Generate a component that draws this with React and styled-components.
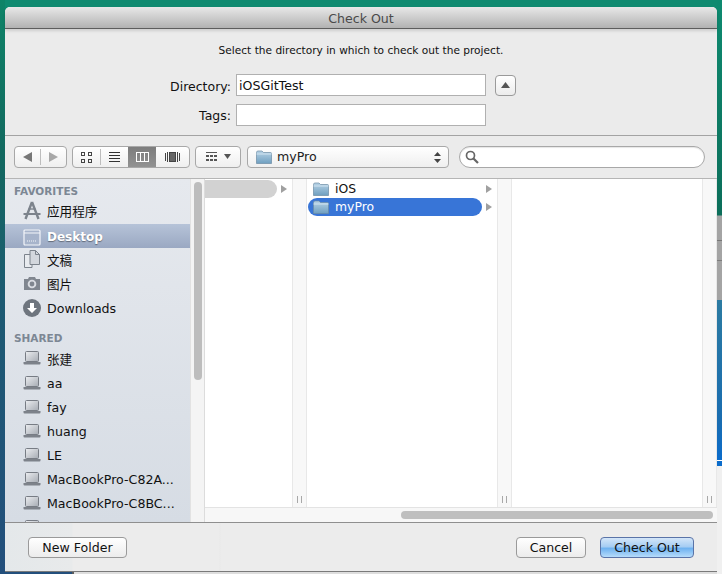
import React from 'react';
import styled, { createGlobalStyle } from 'styled-components';

const GlobalStyle = createGlobalStyle`
  html, body { margin: 0; padding: 0; }
  body {
    width: 722px;
    height: 574px;
    overflow: hidden;
    font-family: "Lucida Grande", "DejaVu Sans", "Noto Sans CJK SC", sans-serif;
  }
`;

const Desktop = styled.div`
  width: 722px;
  height: 574px;
  padding: 7px 5px 0 5px;
  box-sizing: border-box;
  overflow: hidden;
  background:
    linear-gradient(180deg, #0e8a70 0, #0c6e5a 215px, #a4a4a4 216px, #a4a4a4 240px, #777 240px, #777 241px, #a4a4a4 241px, #a4a4a4 260px, #7d7d7d 260px, #7d7d7d 261px, #a4a4a4 261px, #a4a4a4 300px, #2c7ba2 300px, #1a6db0 420px, #0b6ccb 460px, #fff 460px, #fff 461px, #0b6ccb 461px, #0b6ccb 466px, #f0f0f0 466px) right top / 5px 100% no-repeat,
    linear-gradient(180deg, #0e8468 0, #12695f 150px, #1d5a72 300px, #234f7c 574px) left top / 5px 100% no-repeat,
    linear-gradient(90deg, #234f7c 0, #234f7c 72px, #5c5c5c 72px, #5c5c5c 74px, #dedede 74px) left bottom / 100% 3px no-repeat,
    #0f8a70;
`;

const Sheet = styled.div`
  width: 712px;
  height: 564px;
  display: flex;
  flex-direction: column;
  background: #ebebeb;
  border-radius: 5px 5px 0 0;
  box-shadow: 0 1px 0 #7a7a7a;
`;

const TitleBar = styled.div`
  flex: none;
  padding-top: 1px;
  height: 20px;
  display: flex;
  align-items: center;
  justify-content: center;
  font-size: 12.6px;
  color: #4a4a4a;
  background: linear-gradient(180deg, #e8e8e8, #b2b2b2);
  border-bottom: 1px solid #5d5d5d;
  border-radius: 5px 5px 0 0;
  box-shadow: 0 2px 3px rgba(0, 0, 0, 0.12);
`;

const Accessory = styled.div`
  height: 107px;
  flex: none;
  box-sizing: border-box;
  display: flex;
  flex-direction: column;
  border-bottom: 1px solid #a3a3a3;
`;

const Prompt = styled.div`
  margin-top: 14px;
  height: 14px;
  line-height: 14px;
  text-align: center;
  font-size: 10.6px;
  color: #111;
`;

const FormRow = styled.div`
  display: flex;
  align-items: center;
  height: 22px;
  margin-top: ${(p) => p.$top}px;
`;

const FieldLabel = styled.label`
  width: 226px;
  padding-top: ${(p) => p.$drop || 0}px;
  text-align: right;
  font-size: 12.5px;
  color: #111;
  margin-right: 5px;
`;

const TextField = styled.div`
  width: 250px;
  height: 22px;
  box-sizing: border-box;
  border: 1px solid #b0b0b0;
  background: #fff;
  padding-left: 2px;
  line-height: 22px;
  font-size: 12.6px;
  color: #111;
`;

const DisclosureButton = styled.button`
  width: 21px;
  height: 21px;
  margin-left: 9px;
  padding: 0;
  display: flex;
  align-items: center;
  justify-content: center;
  border: 1px solid #9a9a9a;
  border-radius: 4px;
  background: linear-gradient(180deg, #fff, #ececec);
`;

const Toolbar = styled.div`
  height: 43px;
  flex: none;
  box-sizing: border-box;
  display: flex;
  align-items: center;
  padding: 0 12px 0 9px;
  border-bottom: 1px solid #b5b5b5;
`;

const Segmented = styled.div`
  flex: none;
  display: flex;
  align-items: center;
  height: 22px;
  box-sizing: border-box;
  margin-right: ${(p) => p.$gap}px;
  border: 1px solid #a8a8a8;
  border-radius: 4px;
  overflow: hidden;
  background: linear-gradient(180deg, #fff, #efefef);
`;

const Segment = styled.div`
  width: ${(p) => p.$w}px;
  align-self: stretch;
  display: flex;
  align-items: center;
  justify-content: center;
  background: ${(p) => (p.$active ? 'linear-gradient(180deg, #7d7d7d, #929292)' : 'transparent')};
`;

const SegmentLine = styled.span`
  width: 1px;
  height: 16px;
  background: #bdbdbd;
`;

const PathSelect = styled.div`
  flex: none;
  width: 202px;
  height: 22px;
  box-sizing: border-box;
  margin-right: 10px;
  display: flex;
  align-items: center;
  padding: 0 7px 0 8px;
  gap: 5px;
  border: 1px solid #a8a8a8;
  border-radius: 4px;
  font-size: 12.6px;
  color: #222;
  background: linear-gradient(180deg, #fff, #efefef);
`;

const PathName = styled.span`
  margin-bottom: 2px;
`;

const Grow = styled.span`
  flex: 1;
`;

const SearchField = styled.div`
  flex: none;
  width: 246px;
  height: 22px;
  box-sizing: border-box;
  display: flex;
  align-items: center;
  padding-left: 5px;
  border: 1px solid #a8a8a8;
  border-radius: 11px;
  background: #fff;
  box-shadow: inset 0 1px 1px rgba(0, 0, 0, 0.1);
`;

const Browser = styled.div`
  flex: 1;
  display: flex;
  min-height: 0;
  border-bottom: 1px solid #8f8f8f;
`;

const Sidebar = styled.div`
  width: 185px;
  flex: none;
  overflow: hidden;
  box-sizing: border-box;
  background: linear-gradient(180deg, #e6e9ee, #d6dce4);
`;

const SectionTitle = styled.div`
  height: 14px;
  line-height: 14px;
  padding-left: 9px;
  margin: ${(p) => p.$top}px 0 ${(p) => p.$bottom}px;
  font-size: 10.5px;
  font-weight: bold;
  color: #7c8794;
`;

const SideItem = styled.div`
  height: 24px;
  box-sizing: border-box;
  display: flex;
  align-items: center;
  gap: 6px;
  padding: ${(p) => p.$drop || 0}px 0 ${(p) => p.$lift || 0}px 18px;
  font-size: ${(p) => (p.$active ? 12 : 12.6)}px;
  white-space: nowrap;
  color: ${(p) => (p.$active ? '#fff' : '#111')};
  font-weight: ${(p) => (p.$active ? 'bold' : 'normal')};
  text-shadow: ${(p) => (p.$active ? '0 1px 1px rgba(0,0,0,0.4)' : 'none')};
  background: ${(p) => (p.$active ? 'linear-gradient(180deg, #b6c3d8, #9aa8c2)' : 'transparent')};
  & > svg { flex: none; }
`;

const SideScroll = styled.div`
  width: 15px;
  flex: none;
  box-sizing: border-box;
  padding: 3px 2px 0 3px;
  background: #f4f4f4;
  border-left: 1px solid #e2e2e2;
  border-right: 1px solid #dcdcdc;
`;

const SideThumb = styled.div`
  height: 198px;
  border-radius: 4px;
  background: #bdbdbd;
`;

const ColumnsPane = styled.div`
  flex: 1;
  min-width: 0;
  display: flex;
  flex-direction: column;
  background: #fff;
`;

const Columns = styled.div`
  flex: 1;
  display: flex;
  min-height: 0;
`;

const Column = styled.div`
  width: ${(p) => p.$w}px;
  flex: none;
  box-sizing: border-box;
  padding-top: 1px;
  display: flex;
  flex-direction: column;
`;

const Divider = styled.div`
  flex: ${(p) => (p.$last ? '1' : '0 0 15px')};
  display: flex;
  align-items: flex-end;
  justify-content: center;
  padding-bottom: 4px;
  box-sizing: border-box;
  gap: 3px;
  background: #f8f8f8;
  border-left: 1px solid #e8e8e8;
  border-right: 1px solid #e8e8e8;
  & > i { width: 1px; height: 7px; background: #a8a8a8; }
`;

const Row = styled.div`
  height: 18px;
  display: flex;
  align-items: center;
  padding-left: ${(p) => (p.$flush ? 0 : 1)}px;
  font-size: 12.4px;
`;

const RowPill = styled.div`
  flex: 1;
  height: 18px;
  display: flex;
  align-items: center;
  gap: 6px;
  padding-left: 5px;
  border-radius: ${(p) => (p.$ghost ? '0 9px 9px 0' : '9px')};
  background: ${(p) => p.$bg || 'transparent'};
  color: ${(p) => (p.$selected ? '#fff' : '#111')};
`;

const RowName = styled.span`
  margin-bottom: 2px;
`;

const Arrow = styled.span`
  width: 0;
  height: 0;
  margin: 0 5px 0 4px;
  border-style: solid;
  border-width: 4px 0 4px 6px;
  border-color: transparent transparent transparent #a0a0a0;
`;

const HScroll = styled.div`
  height: 15px;
  flex: none;
  box-sizing: border-box;
  padding: 3px 4px 3px 196px;
  background: #f7f7f7;
  border-top: 1px solid #e3e3e3;
`;

const HThumb = styled.div`
  height: 8px;
  border-radius: 4px;
  background: #bfbfbf;
`;

const Footer = styled.div`
  height: 48px;
  flex: none;
  display: flex;
  align-items: center;
  padding: 0 23px;
  gap: 14px;
  background: linear-gradient(90deg, #e4e8ea 0, #e8eaeb 67px, #ececec 68px, #ececec 214px, #e9e9e9 215px, #ececec 216px);
`;

const PushButton = styled.button`
  height: 21px;
  width: ${(p) => p.$w}px;
  padding: 0;
  font: inherit;
  font-size: 12.6px;
  color: #111;
  border-radius: 4px;
  border: 1px solid ${(p) => (p.$primary ? '#5a74a8' : '#9a9a9a')};
  background: ${(p) =>
    p.$primary
      ? 'linear-gradient(180deg, #d4e6f9 0, #a6cdf3 45%, #6fb2f0 55%, #b6dcfb 100%)'
      : 'linear-gradient(180deg, #fff, #ececec)'};
`;

const Folder = ({ selected }) => (
  <svg width="16" height="14" viewBox="0 0 16 14">
    <defs>
      <linearGradient id={selected ? 'fs' : 'fn'} x1="0" y1="0" x2="0" y2="1">
        <stop offset="0" stopColor="#b7d3e6" />
        <stop offset="1" stopColor="#6f9fc0" />
      </linearGradient>
    </defs>
    <path d="M0.5 2.5 Q0.5 1 2 1 H6 L7.5 2.5 H14.5 Q15.5 2.5 15.5 3.5 V13.5 H0.5 Z" fill={`url(#${selected ? 'fs' : 'fn'})`} stroke="#6b8ba3" strokeWidth="0.7" />
    <path d="M0.5 4 H15.5" stroke="#dcebf5" strokeWidth="0.8" />
  </svg>
);

const Laptop = () => (
  <svg width="18" height="14" viewBox="0 0 18 14">
    <defs>
      <linearGradient id="lp" x1="0" y1="0" x2="1" y2="1">
        <stop offset="0" stopColor="#eceef1" />
        <stop offset="1" stopColor="#a6abb3" />
      </linearGradient>
    </defs>
    <rect x="2.5" y="0.5" width="13" height="10" rx="1" fill="url(#lp)" stroke="#777c84" />
    <path d="M0.5 11 H17.5 V12.5 Q17.5 13.5 16.5 13.5 H1.5 Q0.5 13.5 0.5 12.5 Z" fill="#7d828a" />
  </svg>
);

const AppsIcon = () => (
  <svg width="18" height="19" viewBox="0 0 18 19" fill="none" stroke="#7c838c">
    <path d="M9 1 L2.5 18 M9 1 L15.5 18" strokeWidth="2.4" />
    <path d="M0.5 13 H17.5" strokeWidth="2" />
    <path d="M5.5 8 H12.5" strokeWidth="1.4" />
  </svg>
);

const DesktopIcon = () => (
  <svg width="18" height="17" viewBox="0 0 18 17">
    <rect x="1" y="1" width="16" height="15" rx="1" fill="#a7b4cb" stroke="#f4f6fa" strokeWidth="1.2" />
    <path d="M1 4 H17" stroke="#f4f6fa" />
    <path d="M4 12 H14" stroke="#f4f6fa" strokeDasharray="1 1" />
  </svg>
);

const DocsIcon = () => (
  <svg width="18" height="18" viewBox="0 0 18 18">
    <path d="M1.5 4.5 H9 V17.5 H1.5 Z" fill="#e8ebef" stroke="#7c838c" />
    <path d="M7 0.5 H12.5 L16.5 4.5 V14.5 H7 Z" fill="#d3d7dd" stroke="#7c838c" />
    <path d="M12.5 0.5 V4.5 H16.5" fill="none" stroke="#7c838c" />
  </svg>
);

const CameraIcon = () => (
  <svg width="18" height="15" viewBox="0 0 18 15">
    <path d="M1 3 H5 L6 1 H12 L13 3 H17 V14 H1 Z" fill="#80868f" />
    <circle cx="9" cy="8" r="4.3" fill="#d9dce1" />
    <circle cx="9" cy="8" r="2.4" fill="#80868f" />
  </svg>
);

const DownloadIcon = () => (
  <svg width="18" height="18" viewBox="0 0 18 18">
    <circle cx="9" cy="9" r="9" fill="#6e757e" />
    <path d="M7 4 H11 V9 H14 L9 14 L4 9 H7 Z" fill="#fff" />
  </svg>
);

const shared = ['aa', 'fay', 'huang', 'LE', 'MacBookPro-C82A...', 'MacBookPro-C8BC...'];

const App = () => {
  return (
    <>
      <GlobalStyle />
      <Desktop>
        <Sheet>
          <TitleBar>Check Out</TitleBar>
          <Accessory>
            <Prompt>Select the directory in which to check out the project.</Prompt>
            <FormRow $top={17}>
              <FieldLabel $drop={2}>Directory:</FieldLabel>
              <TextField>iOSGitTest</TextField>
              <DisclosureButton>
                <svg width="9" height="6" viewBox="0 0 9 6"><path d="M4.5 0 L9 6 H0 Z" fill="#555" /></svg>
              </DisclosureButton>
            </FormRow>
            <FormRow $top={8}>
              <FieldLabel>Tags:</FieldLabel>
              <TextField />
            </FormRow>
          </Accessory>
          <Toolbar>
            <Segmented $gap={5}>
              <Segment $w={25}>
                <svg width="9" height="10" viewBox="0 0 9 10"><path d="M9 0 V10 L0 5 Z" fill="#777" /></svg>
              </Segment>
              <SegmentLine />
              <Segment $w={25}>
                <svg width="9" height="10" viewBox="0 0 9 10"><path d="M0 0 V10 L9 5 Z" fill="#a8a8a8" /></svg>
              </Segment>
            </Segmented>
            <Segmented $gap={5}>
              <Segment $w={27}>
                <svg width="11" height="11" viewBox="0 0 11 11" fill="none" stroke="#444"><rect x="0.5" y="0.5" width="3" height="3" /><rect x="7.5" y="0.5" width="3" height="3" /><rect x="0.5" y="7.5" width="3" height="3" /><rect x="7.5" y="7.5" width="3" height="3" /></svg>
              </Segment>
              <SegmentLine />
              <Segment $w={27}>
                <svg width="11" height="10" viewBox="0 0 11 10" stroke="#333"><path d="M0 0.5 H11 M0 3.5 H11 M0 6.5 H11 M0 9.5 H11" /></svg>
              </Segment>
              <Segment $w={28} $active>
                <svg width="13" height="10" viewBox="0 0 13 10" fill="none" stroke="#fff"><rect x="0.5" y="0.5" width="12" height="9" /><path d="M4.5 0 V10 M8.5 0 V10" /></svg>
              </Segment>
              <Segment $w={33}>
                <svg width="15" height="10" viewBox="0 0 15 10" stroke="#444" fill="none"><path d="M0.5 1 V9 M2.5 0 V10 M12.5 0 V10 M14.5 1 V9" /><rect x="4.5" y="0.5" width="6" height="9" fill="#666" /></svg>
              </Segment>
            </Segmented>
            <Segmented $gap={6}>
              <Segment $w={44}>
                <svg width="25" height="10" viewBox="0 0 25 10" fill="#555"><path d="M0 0 H11 V1 H0 Z" /><path d="M0 3 H3 V5 H0 Z M4 3 H7 V5 H4 Z M8 3 H11 V5 H8 Z M0 7 H3 V9 H0 Z M4 7 H7 V9 H4 Z M8 7 H11 V9 H8 Z" /><path d="M18 2 H25 L21.5 7 Z" /></svg>
              </Segment>
            </Segmented>
            <PathSelect>
              <Folder />
              <PathName>myPro</PathName>
              <Grow />
              <svg width="7" height="11" viewBox="0 0 7 11" fill="#444"><path d="M3.5 0 L7 4 H0 Z M3.5 11 L0 7 H7 Z" /></svg>
            </PathSelect>
            <SearchField>
              <svg width="14" height="14" viewBox="0 0 14 14" fill="none" stroke="#666" strokeWidth="1.7"><circle cx="5.5" cy="5.5" r="4" /><path d="M8.5 8.5 L13 13" strokeWidth="2.2" /></svg>
            </SearchField>
          </Toolbar>
          <Browser>
            <Sidebar>
              <SectionTitle $top={5} $bottom={2}>FAVORITES</SectionTitle>
              <SideItem $lift={3}><AppsIcon />应用程序</SideItem>
              <SideItem $active $drop={2}><DesktopIcon />Desktop</SideItem>
              <SideItem $lift={2}><DocsIcon />文稿</SideItem>
              <SideItem $lift={2}><CameraIcon />图片</SideItem>
              <SideItem><DownloadIcon />Downloads</SideItem>
              <SectionTitle $top={11} $bottom={2}>SHARED</SectionTitle>
              <SideItem $lift={2}><Laptop />张建</SideItem>
              {shared.map((name) => (
                <SideItem key={name}><Laptop />{name}</SideItem>
              ))}
              <SideItem><Laptop />zhihao</SideItem>
            </Sidebar>
            <SideScroll>
              <SideThumb />
            </SideScroll>
            <ColumnsPane>
              <Columns>
                <Column $w={87}>
                  <Row $flush>
                    <RowPill $ghost $bg="#d2d2d2" />
                    <Arrow />
                  </Row>
                </Column>
                <Divider><i /><i /></Divider>
                <Column $w={190}>
                  <Row>
                    <RowPill><Folder /><RowName>iOS</RowName></RowPill>
                    <Arrow />
                  </Row>
                  <Row>
                    <RowPill $bg="#3875d7" $selected><Folder selected /><RowName>myPro</RowName></RowPill>
                    <Arrow />
                  </Row>
                </Column>
                <Divider><i /><i /></Divider>
                <Column $w={190} />
                <Divider $last><i /><i /></Divider>
              </Columns>
              <HScroll><HThumb /></HScroll>
            </ColumnsPane>
          </Browser>
          <Footer>
            <PushButton $w={99}>New Folder</PushButton>
            <Grow />
            <PushButton $w={70}>Cancel</PushButton>
            <PushButton $w={94} $primary>Check Out</PushButton>
          </Footer>
        </Sheet>
      </Desktop>
    </>
  );
};

export default App;
